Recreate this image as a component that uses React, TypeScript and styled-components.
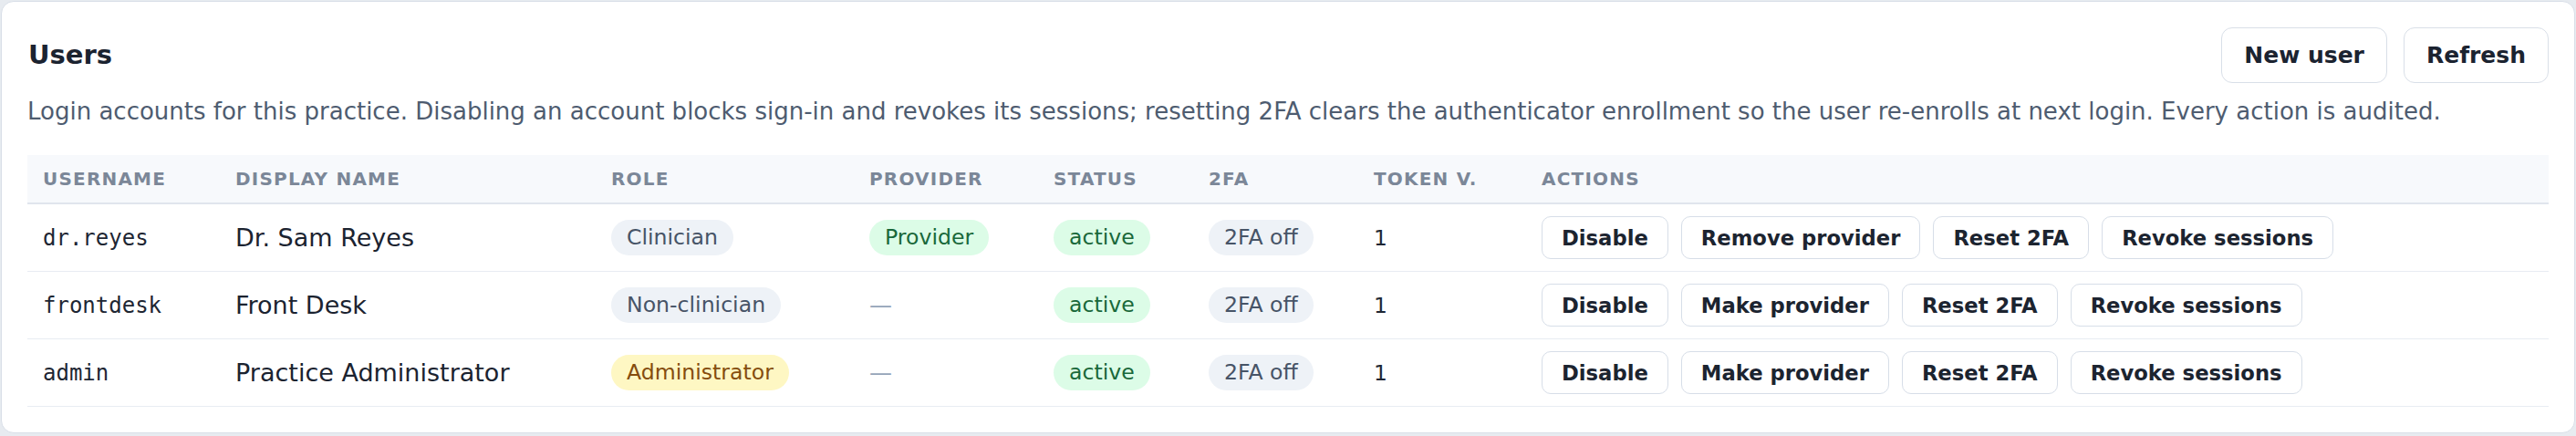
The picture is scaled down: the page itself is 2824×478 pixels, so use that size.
import React from "react";
import styled, { createGlobalStyle } from "styled-components";

const GlobalStyle = createGlobalStyle`
  html, body {
    margin: 0;
    padding: 0;
    background: #e7ebf0;
    font-family: "DejaVu Sans", "Liberation Sans", sans-serif;
  }
  #root {
    padding: 1px;
  }
`;

const Card = styled.section`
  background: #ffffff;
  border: 1px solid #d9dfe8;
  border-radius: 14px;
  padding: 28px;
`;

const HeaderRow = styled.div`
  display: flex;
  align-items: center;
  justify-content: space-between;
`;

const Title = styled.h2`
  margin: 0;
  font-size: 29px;
  font-weight: 700;
  line-height: 1.2;
  color: #1b2330;
  padding-left: 1px;
`;

const Toolbar = styled.div`
  display: flex;
  gap: 18px;
`;

const TopButton = styled.button`
  height: 61px;
  padding: 0 24px;
  border: 1px solid #d9dfe8;
  border-radius: 12px;
  background: #ffffff;
  font-family: "DejaVu Sans", sans-serif;
  font-size: 25px;
  font-weight: 700;
  color: #1b2330;
  cursor: pointer;
`;

const Description = styled.p`
  margin: 13px 0 30px;
  font-size: 26px;
  line-height: 36px;
  color: #4e5c70;
`;

const Table = styled.table`
  width: 100%;
  border-collapse: collapse;
  table-layout: fixed;
`;

const HeadCell = styled.th`
  padding: 14px 17px;
  background: #f7f9fc;
  border-bottom: 2px solid #e0e5ed;
  text-align: left;
  font-size: 20px;
  line-height: 24px;
  font-weight: 700;
  letter-spacing: 1.2px;
  text-transform: uppercase;
  color: #7b8798;
  white-space: nowrap;
`;

const Cell = styled.td`
  padding: 13px 17px;
  border-bottom: 1px solid #e8ecf2;
  vertical-align: middle;
  font-size: 23.4px;
  color: #1e2633;
  white-space: nowrap;
`;

const Mono = styled.span`
  font-family: "DejaVu Sans Mono", monospace;
  font-size: 24px;
  color: #1e2633;
`;

const Name = styled.span`
  font-size: 27px;
  color: #1b2330;
`;

type Tone = "gray" | "green" | "yellow";

const toneStyles: Record<Tone, { bg: string; fg: string }> = {
  gray: { bg: "#eef2f7", fg: "#475467" },
  green: { bg: "#dcfce7", fg: "#19683a" },
  yellow: { bg: "#fef7c3", fg: "#854d0e" },
};

const Pill = styled.span<{ $tone: Tone }>`
  display: inline-block;
  padding: 4px 17px;
  border-radius: 999px;
  font-size: 23.6px;
  line-height: 31px;
  background: ${(p) => toneStyles[p.$tone].bg};
  color: ${(p) => toneStyles[p.$tone].fg};
`;

const Dash = styled.span`
  font-size: 25px;
  color: #94a3b8;
`;

const Actions = styled.div`
  display: flex;
  gap: 14px;
`;

const ActionButton = styled.button`
  height: 47px;
  padding: 0 21px;
  border: 1px solid #d7dee8;
  border-radius: 10px;
  background: #ffffff;
  font-family: "DejaVu Sans", sans-serif;
  font-size: 22.7px;
  font-weight: 700;
  color: #1c2430;
  white-space: nowrap;
  cursor: pointer;
`;

type Role = { label: string; tone: Tone };

type User = {
  username: string;
  display: string;
  role: Role;
  provider: boolean;
  status: string;
  twofa: string;
  token: number;
};

const users: User[] = [
  {
    username: "dr.reyes",
    display: "Dr. Sam Reyes",
    role: { label: "Clinician", tone: "gray" },
    provider: true,
    status: "active",
    twofa: "2FA off",
    token: 1,
  },
  {
    username: "frontdesk",
    display: "Front Desk",
    role: { label: "Non-clinician", tone: "gray" },
    provider: false,
    status: "active",
    twofa: "2FA off",
    token: 1,
  },
  {
    username: "admin",
    display: "Practice Administrator",
    role: { label: "Administrator", tone: "yellow" },
    provider: false,
    status: "active",
    twofa: "2FA off",
    token: 1,
  },
];

const columns = [
  { label: "Username", width: 211 },
  { label: "Display name", width: 412 },
  { label: "Role", width: 283 },
  { label: "Provider", width: 202 },
  { label: "Status", width: 170 },
  { label: "2FA", width: 181 },
  { label: "Token v.", width: 184 },
  { label: "Actions", width: undefined as number | undefined },
];

export default function App() {
  return (
    <>
      <GlobalStyle />
      <Card>
        <HeaderRow>
          <Title>Users</Title>
          <Toolbar>
            <TopButton>New user</TopButton>
            <TopButton>Refresh</TopButton>
          </Toolbar>
        </HeaderRow>
        <Description>
          Login accounts for this practice. Disabling an account blocks sign-in and revokes its
          sessions; resetting 2FA clears the authenticator enrollment so the user re-enrolls at next
          login. Every action is audited.
        </Description>
        <Table>
          <colgroup>
            {columns.map((c) => (
              <col key={c.label} style={c.width ? { width: c.width } : undefined} />
            ))}
          </colgroup>
          <thead>
            <tr>
              {columns.map((c) => (
                <HeadCell key={c.label}>{c.label}</HeadCell>
              ))}
            </tr>
          </thead>
          <tbody>
            {users.map((u) => (
              <tr key={u.username}>
                <Cell>
                  <Mono>{u.username}</Mono>
                </Cell>
                <Cell>
                  <Name>{u.display}</Name>
                </Cell>
                <Cell>
                  <Pill $tone={u.role.tone}>{u.role.label}</Pill>
                </Cell>
                <Cell>{u.provider ? <Pill $tone="green">Provider</Pill> : <Dash>—</Dash>}</Cell>
                <Cell>
                  <Pill $tone="green">{u.status}</Pill>
                </Cell>
                <Cell>
                  <Pill $tone="gray">{u.twofa}</Pill>
                </Cell>
                <Cell>{u.token}</Cell>
                <Cell>
                  <Actions>
                    <ActionButton>Disable</ActionButton>
                    <ActionButton>{u.provider ? "Remove provider" : "Make provider"}</ActionButton>
                    <ActionButton>Reset 2FA</ActionButton>
                    <ActionButton>Revoke sessions</ActionButton>
                  </Actions>
                </Cell>
              </tr>
            ))}
          </tbody>
        </Table>
      </Card>
    </>
  );
}
